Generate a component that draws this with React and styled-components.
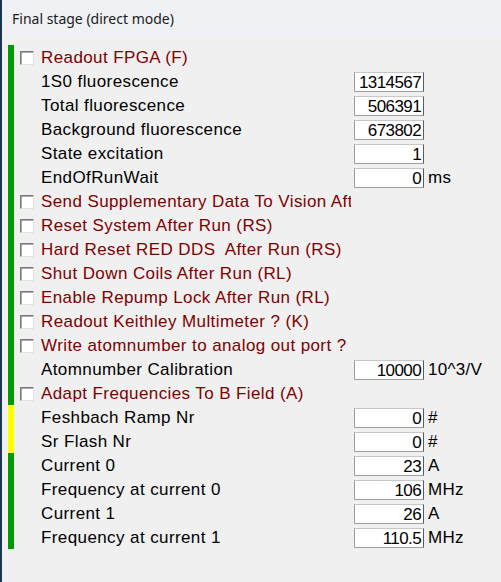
import React from 'react';
import styled, { createGlobalStyle } from 'styled-components';

const GlobalStyle = createGlobalStyle`
  html, body {
    margin: 0;
    padding: 0;
    background: #f0f0f0;
  }
`;

const rows = [
  { kind: 'check', label: 'Readout FPGA (F)' },
  { kind: 'field', label: '1S0 fluorescence', value: '1314567' },
  { kind: 'field', label: 'Total fluorescence', value: '506391' },
  { kind: 'field', label: 'Background fluorescence', value: '673802' },
  { kind: 'field', label: 'State excitation', value: '1' },
  { kind: 'field', label: 'EndOfRunWait', value: '0', unit: 'ms' },
  { kind: 'check', label: 'Send Supplementary Data To Vision After Run' },
  { kind: 'check', label: 'Reset System After Run (RS)' },
  { kind: 'check', label: 'Hard Reset RED DDS  After Run (RS)' },
  { kind: 'check', label: 'Shut Down Coils After Run (RL)' },
  { kind: 'check', label: 'Enable Repump Lock After Run (RL)' },
  { kind: 'check', label: 'Readout Keithley Multimeter ? (K)' },
  { kind: 'check', label: 'Write atomnumber to analog out port ?' },
  { kind: 'field', label: 'Atomnumber Calibration', value: '10000', unit: '10^3/V' },
  { kind: 'check', label: 'Adapt Frequencies To B Field (A)' },
  { kind: 'field', label: 'Feshbach Ramp Nr', value: '0', unit: '#', mark: '#ffff00' },
  { kind: 'field', label: 'Sr Flash Nr', value: '0', unit: '#', mark: '#ffff00' },
  { kind: 'field', label: 'Current 0', value: '23', unit: 'A' },
  { kind: 'field', label: 'Frequency at current 0', value: '106', unit: 'MHz' },
  { kind: 'field', label: 'Current 1', value: '26', unit: 'A' },
  { kind: 'field', label: 'Frequency at current 1', value: '110.5', unit: 'MHz' },
];

const App = () => (
  <>
    <GlobalStyle />
    <Window>
      <TitleBar>Final stage (direct mode)</TitleBar>
      <Panel>
        {rows.map((r, i) => (
          <Row key={i}>
            <Marker $color={r.mark || '#009a00'} />
            <CheckSlot>{r.kind === 'check' && <CheckBox />}</CheckSlot>
            <Label $option={r.kind === 'check'}>{r.label}</Label>
            {r.kind === 'field' && <Field>{r.value}</Field>}
            {r.unit && <Unit>{r.unit}</Unit>}
          </Row>
        ))}
      </Panel>
    </Window>
  </>
);

const Window = styled.div`
  width: 501px;
  height: 582px;
  box-sizing: border-box;
  border-left: 2px solid #1c3650;
  background: #f0f0f0;
  overflow: hidden;
`;

const TitleBar = styled.div`
  height: 36px;
  display: flex;
  align-items: center;
  padding-left: 10px;
  background: #eff1f4;
  color: #1b1b1b;
  font-family: "Noto Sans", "Open Sans", sans-serif;
  font-size: 14px;
`;

const Panel = styled.div`
  display: flex;
  flex-direction: column;
  padding: 9px 0 0 6px;
`;

const Row = styled.div`
  display: flex;
  align-items: center;
  height: 24px;
  padding-top: 1px;
  box-sizing: border-box;
  font-family: "Liberation Sans", Arial, sans-serif;
  font-size: 17px;
`;

const Marker = styled.div`
  width: 6px;
  align-self: stretch;
  margin-top: -1px;
  background: ${(p) => p.$color};
`;

const CheckSlot = styled.div`
  width: 14px;
  height: 14px;
  margin: 0 7px 0 6px;
`;

const CheckBox = styled.div`
  width: 14px;
  height: 14px;
  box-sizing: border-box;
  background: #fff;
  border: 1px solid;
  border-color: #7c7c7c #e2e2e2 #e2e2e2 #7c7c7c;
  box-shadow: inset 1px 1px 0 #a8a8a8;
`;

const Label = styled.div`
  width: 310px;
  margin-right: 3px;
  white-space: pre;
  overflow: hidden;
  letter-spacing: 0.4px;
  color: ${(p) => (p.$option ? '#800000' : '#000')};
`;

const Field = styled.div`
  width: 70px;
  height: 20px;
  box-sizing: border-box;
  background: #fff;
  border: 1px solid;
  border-color: #c8c8c8 #5a5a5a #a0a0a0 #9a9a9a;
  text-align: right;
  padding-right: 2px;
  line-height: 19px;
  letter-spacing: -0.6px;
  color: #000;
`;

const Unit = styled.div`
  margin-left: 4px;
  letter-spacing: 0.3px;
  color: #000;
`;

export default App;
